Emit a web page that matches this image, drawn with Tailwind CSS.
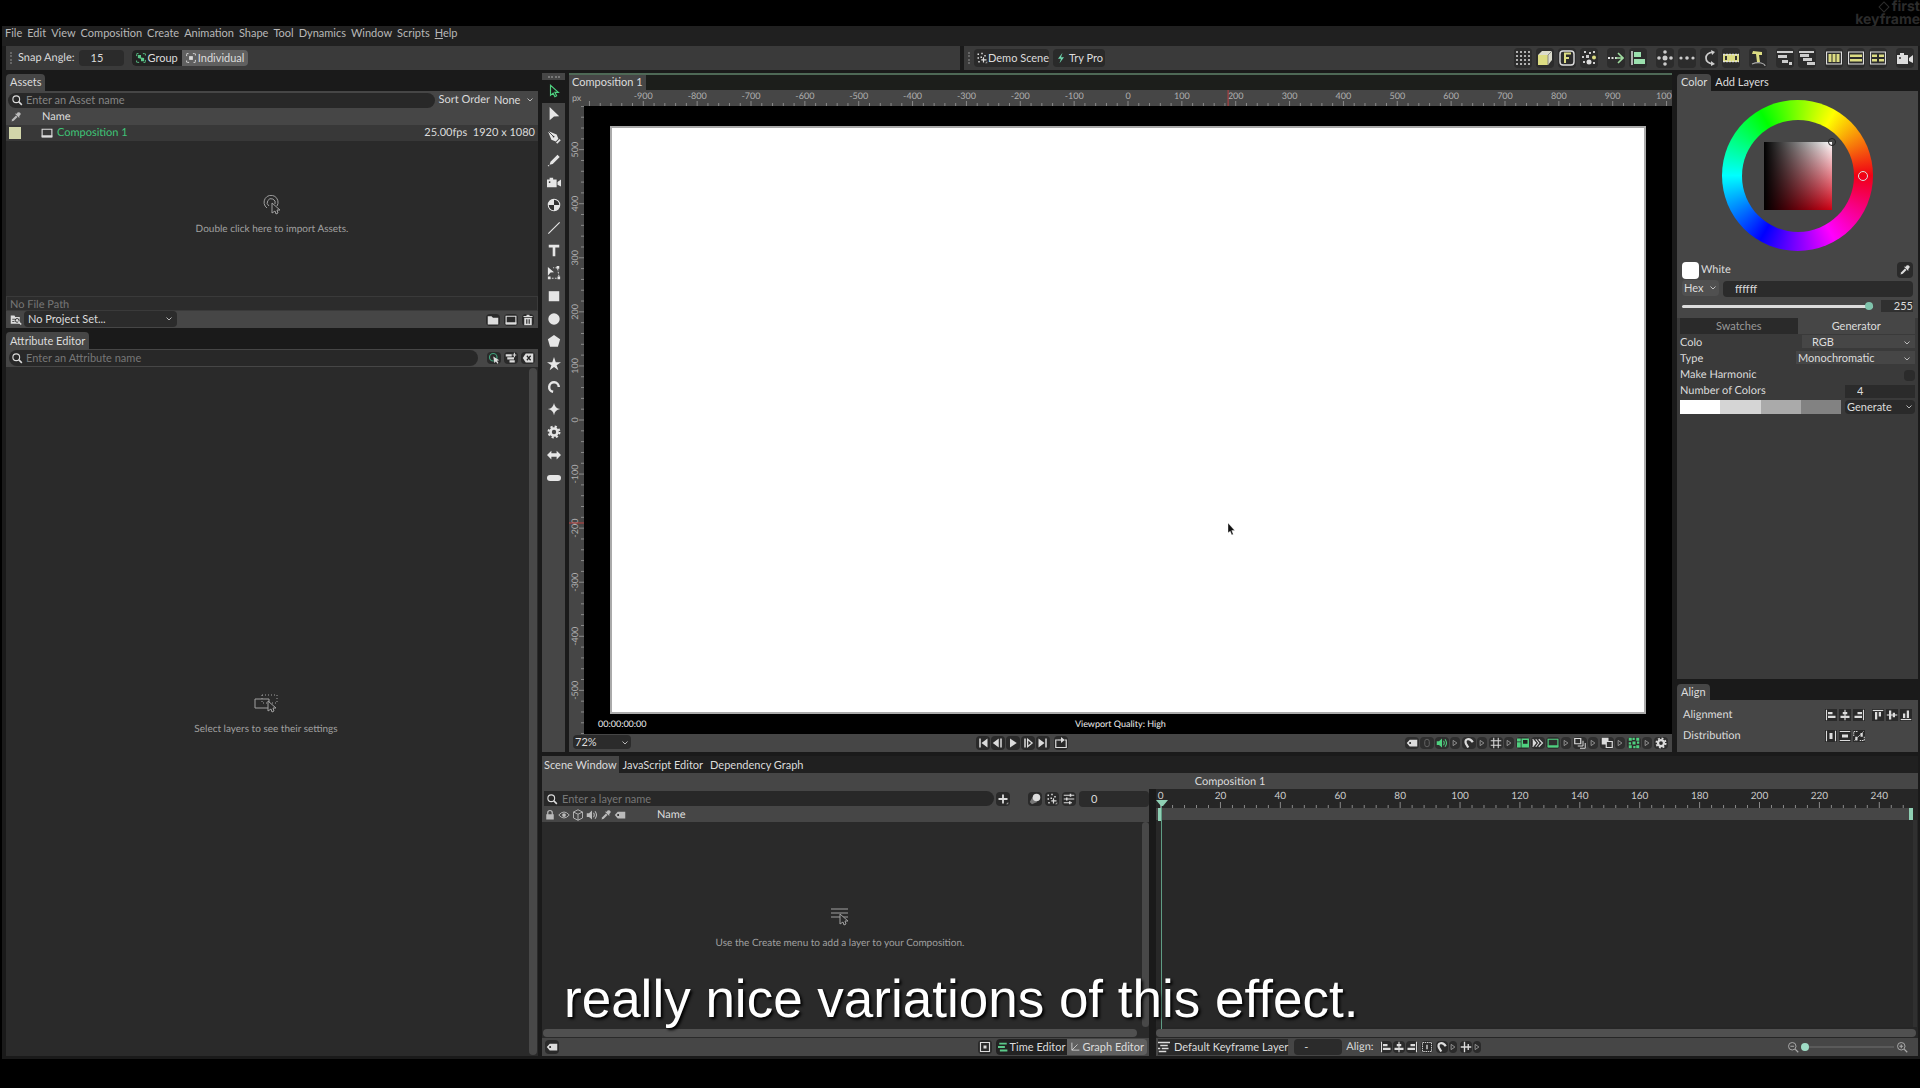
<!DOCTYPE html>
<html lang="en">
<head>
    <title>Composition 1</title>
    <meta charset="UTF-8">
    <meta name="viewport" content="width=device-width, initial-scale=1">
    <script src="https://cdn.jsdelivr.net/npm/@tailwindcss/browser@4"></script>
</head>
<body class="relative flex h-screen flex-col overflow-hidden bg-black font-['Lato',sans-serif] text-[11px] leading-4 text-[#dcdcdc] [text-rendering:geometricPrecision]">

    <!-- icon set, 16x16 -->
    <svg class="hidden">
        <symbol id="search" viewBox="0 0 16 16"><circle cx="7" cy="7" r="4.5" fill="none" stroke="currentColor" stroke-width="1.5"/><path d="M10.5 10.5l4 4" stroke="currentColor" stroke-width="2"/></symbol>
        <symbol id="chevron" viewBox="0 0 16 16"><path d="M3 5l5 5 5-5" fill="none" stroke="currentColor" stroke-width="1.6"/></symbol>
        <symbol id="dropper" viewBox="0 0 16 16"><path d="M2 14l1-3 5-5 2 2-5 5z" fill="currentColor"/><path d="M7 4l5 5 1-1-1-1 2-2q1-2-1-3t-3 0L9 4 8 3z" fill="currentColor"/></symbol>
        <symbol id="monitor" viewBox="0 0 16 16"><path d="M1.5 3h13v10h-13z" fill="none" stroke="currentColor" stroke-width="1.5"/><path d="M1 11h14v3H1z" fill="currentColor"/></symbol>
        <symbol id="folder" viewBox="0 0 16 16"><path d="M1 3h5l2 2h7v9H1z" fill="currentColor"/></symbol>
        <symbol id="folder-search" viewBox="0 0 16 16"><path d="M1 2h5l1 2h6v9H1z" fill="currentColor"/><path d="M3 7h4M3 10h3" stroke="#222" stroke-width="1"/><circle cx="9.500" cy="8.500" r="2.500" fill="currentColor" stroke="#222" stroke-width="1.200"/><path d="M11 10l4 4" stroke="currentColor" stroke-width="2"/></symbol>
        <symbol id="trash" viewBox="0 0 16 16"><path d="M3 5h10v10H3zM2 2.500h4V1h4v1.500h4V4H2z" fill="currentColor"/><path d="M6 7v6M8 7v6M10 7v6" stroke="#222" stroke-width="1"/></symbol>
        <symbol id="tag" viewBox="0 0 16 16"><path d="M1 8l4-4.500h10v9H5z" fill="currentColor"/><circle cx="5.500" cy="8" r="1.300" fill="#222"/></symbol>
        <symbol id="backspace" viewBox="0 0 16 16"><path d="M1 8l4-6h10v12H5z" fill="currentColor"/><path d="M6.500 5l5 6M11.500 5l-5 6" stroke="#222" stroke-width="1.600"/></symbol>
        <symbol id="layers-add" viewBox="0 0 16 16"><path d="M1 3h8v3H1zM3 7h9v3H3zM6 11h7v3H6z" fill="currentColor"/><path d="M12.500 1v6M10 4h5" stroke="currentColor" stroke-width="1.400"/></symbol>
        <symbol id="pick" viewBox="0 0 16 16"><circle cx="7" cy="7" r="5" fill="none" stroke="#3fa07a" stroke-width="1.600"/><path d="M7 6l8 5-3 .5 2 3-1.500 1-2-3-2 2z" fill="#ddd"/></symbol>
        <symbol id="arrow" viewBox="0 0 16 16"><path d="M4 1.500v11.500l3-2.500 2 4 2-1-2-4h4z" fill="none" stroke="currentColor" stroke-width="1.300"/></symbol>
        <symbol id="arrow-fill" viewBox="0 0 16 16"><path d="M3 0l11 10.500-6 .3L3 15z" fill="currentColor"/></symbol>
        <symbol id="pen" viewBox="0 0 16 16"><path d="M1 1l10 4 2 5-3 3-5-2z" fill="currentColor"/><path d="M1 1l6 6" stroke="#333" stroke-width="1"/><circle cx="7.500" cy="7.500" r="1" fill="#333"/><path d="M15 11l-4 4" stroke="currentColor" stroke-width="2"/></symbol>
        <symbol id="pencil" viewBox="0 0 16 16"><path d="M4 10l8-8 2.500 2.500-8 8-3.500 1z" fill="currentColor"/><path d="M1 14.500h1.500" stroke="currentColor" stroke-width="1.200"/></symbol>
        <symbol id="camera" viewBox="0 0 16 16"><path d="M0 5h3V3h4v2h4v9H0zM12 8l4-3v8l-4-2z" fill="currentColor"/><circle cx="3" cy="8" r="1" fill="#333"/></symbol>
        <symbol id="null" viewBox="0 0 16 16"><circle cx="8" cy="8" r="6.500" fill="currentColor" stroke="currentColor" stroke-width="1.300"/><path d="M8 8V2A6 6 0 0 1 14 8zM8 8v6A6 6 0 0 1 2 8z" fill="#333"/></symbol>
        <symbol id="line" viewBox="0 0 16 16"><path d="M1.500 14.500l13-13" stroke="currentColor" stroke-width="1.300"/></symbol>
        <symbol id="type" viewBox="0 0 16 16"><path d="M2 2h12v3H9.500v10h-3V5H2z" fill="currentColor"/></symbol>
        <symbol id="transform" viewBox="0 0 16 16"><path d="M2 14h12L12 2H7" fill="none" stroke="currentColor" stroke-width="1" stroke-dasharray="2 1.500"/><path d="M1 1l7 6-4 .5L1 11z" fill="currentColor"/><path d="M1 12h3v3H1zM12 12h3v3h-3zM11 0h3v3h-3z" fill="currentColor"/></symbol>
        <symbol id="rect" viewBox="0 0 16 16"><path d="M2 2.500h12v11.500H2z" fill="currentColor"/></symbol>
        <symbol id="circle" viewBox="0 0 16 16"><circle cx="8" cy="8" r="6.500" fill="currentColor"/></symbol>
        <symbol id="pentagon" viewBox="0 0 16 16"><path d="M8 1l7 5-2.500 8.500h-9L1 6z" fill="currentColor"/></symbol>
        <symbol id="star" viewBox="0 0 16 16"><path d="M8 0l2 6h6l-5 3.500L13 15l-5-3.500L3 15l2-5.500L0 6h6z" fill="currentColor"/></symbol>
        <symbol id="arc" viewBox="0 0 16 16"><path d="M7 13.500A5.500 5.500 0 1 1 13.500 8" fill="none" stroke="currentColor" stroke-width="2.800"/></symbol>
        <symbol id="sparkle" viewBox="0 0 16 16"><path d="M8 1q1 6 7 7-6 1-7 7-1-6-7-7 6-1 7-7z" fill="currentColor"/></symbol>
        <symbol id="gear" viewBox="0 0 16 16"><circle cx="8" cy="8" r="4" fill="none" stroke="currentColor" stroke-width="3"/><circle cx="8" cy="8" r="6.200" fill="none" stroke="currentColor" stroke-width="2.400" stroke-dasharray="2.500 2.370"/></symbol>
        <symbol id="stretch" viewBox="0 0 16 16"><path d="M0 8l5-5v3h6V3l5 5-5 5v-3H5v3z" fill="currentColor"/></symbol>
        <symbol id="capsule" viewBox="0 0 16 16"><rect x="0" y="4.500" width="16" height="7" rx="3.500" fill="currentColor"/></symbol>
        <symbol id="play" viewBox="0 0 16 16"><path d="M4 2l9 6-9 6z" fill="currentColor"/></symbol>
        <symbol id="start" viewBox="0 0 16 16"><path d="M3 2h2v12H3zM14 2v12L6 8z" fill="currentColor"/></symbol>
        <symbol id="prev" viewBox="0 0 16 16"><path d="M9 2v12L1 8zM11 2h2v12h-2z" fill="currentColor"/></symbol>
        <symbol id="next" viewBox="0 0 16 16"><path d="M3 2h2v12H3z" fill="currentColor"/><path d="M7.500 3l6 5-6 5z" fill="none" stroke="currentColor" stroke-width="1.700"/></symbol>
        <symbol id="end" viewBox="0 0 16 16"><path d="M2 2l8 6-8 6zM11 2h2v12h-2z" fill="currentColor"/></symbol>
        <symbol id="loop" viewBox="0 0 16 16"><path d="M13 4h2v10H1V4h3" fill="none" stroke="currentColor" stroke-width="1.600"/><path d="M4 4h5" stroke="currentColor" stroke-width="1.600"/><path d="M8 0l5 4-5 4z" fill="currentColor"/></symbol>
        <symbol id="tri" viewBox="0 0 8 16"><path d="M1.500 4.500l5 3.500-5 3.500z" fill="none" stroke="#999" stroke-width="1.200"/></symbol>
        <symbol id="pill" viewBox="0 0 16 16"><rect x="5" y="3" width="6" height="10" rx="3" fill="none" stroke="#666" stroke-width="1.200"/></symbol>
        <symbol id="speaker" viewBox="0 0 16 16"><path d="M1 5.500h3L8 2v12l-4-3.500H1z" fill="currentColor"/><path d="M10 5q2 3 0 6M12 3q4 5 0 10" fill="none" stroke="currentColor" stroke-width="1.400"/></symbol>
        <symbol id="magnet" viewBox="0 0 16 16"><path d="M7 14L4 9Q2 4 6 3t7 4" fill="none" stroke="currentColor" stroke-width="3"/></symbol>
        <symbol id="grid" viewBox="0 0 16 16"><path d="M5 1v14M11 1v14M1 5h14M1 11h14" stroke="currentColor" stroke-width="1.400"/></symbol>
        <symbol id="panels" viewBox="0 0 16 16"><path d="M0 2h5v4H0zM0 7h5v7H0zM6 2h10v12H6z" fill="currentColor"/><path d="M8 4h6v5H8z" fill="#222"/></symbol>
        <symbol id="onion" viewBox="0 0 16 16"><path d="M1 3l4 5-4 5M5 3l4 5-4 5M9 3l5 5-5 5" fill="none" stroke="currentColor" stroke-width="1.500"/><path d="M1 3l4 5-4 5z" fill="currentColor"/></symbol>
        <symbol id="copy" viewBox="0 0 16 16"><path d="M1 2h8v7H1z" fill="none" stroke="currentColor" stroke-width="1.600"/><path d="M5 12h7V5M8 15h7V8" fill="none" stroke="currentColor" stroke-width="1.300"/></symbol>
        <symbol id="overlap" viewBox="0 0 16 16"><path d="M1 1h9v9H1z" fill="currentColor"/><path d="M7 6h8v8H7z" fill="#333" stroke="currentColor" stroke-width="1.600"/></symbol>
        <symbol id="checker" viewBox="0 0 16 16"><path d="M1 1h4v4H1zM11 1h4v4h-4zM6 6h4v4H6zM1 11h4v4H1zM11 11h4v4h-4zM6 1h3v3H6zM7 12h3v3H7zM1 7h3v3H1zM12 6h3v3h-3z" fill="currentColor"/></symbol>
        <symbol id="plus" viewBox="0 0 16 16"><path d="M8 2v12M2 8h12" stroke="currentColor" stroke-width="2.400"/><path d="M15 12v3h-3z" fill="#999"/></symbol>
        <symbol id="ball" viewBox="0 0 16 16"><path d="M5 5L1 12l3 3 7-3z" fill="#777"/><circle cx="10" cy="6" r="5" fill="currentColor"/></symbol>
        <symbol id="scatter" viewBox="0 0 16 16"><path d="M2 2h2v2H2zM7 1h2v2H7zM2 7h2v2H2zM11 4h2v2h-2zM6 6h2v2H6zM3 12h2v2H3z" fill="currentColor"/><path d="M10 7v7M7 10.500h7" stroke="currentColor" stroke-width="1.600"/><path d="M15 12v3h-3z" fill="#999"/></symbol>
        <symbol id="sliders" viewBox="0 0 16 16"><path d="M1 3h14M1 8h14M1 13h11" stroke="currentColor" stroke-width="1.500"/><path d="M9 1h2v4H9zM4 6h2v4H4zM8 11h2v4H8z" fill="currentColor"/></symbol>
        <symbol id="lock" viewBox="0 0 16 16"><path d="M3 7h10v7H3z" fill="currentColor"/><path d="M5 8V5q0-3 3-3t3 3v3" fill="none" stroke="currentColor" stroke-width="1.600"/></symbol>
        <symbol id="eye" viewBox="0 0 16 16"><path d="M1 8q7-8 14 0-7 8-14 0z" fill="none" stroke="currentColor" stroke-width="1.200"/><circle cx="8" cy="8" r="2.500" fill="currentColor"/></symbol>
        <symbol id="cube" viewBox="0 0 16 16"><path d="M8 1l6 3v8l-6 3-6-3V4zM2 4l6 3 6-3M8 7v8" fill="none" stroke="currentColor" stroke-width="1.200"/></symbol>
        <symbol id="framebox" viewBox="0 0 16 16"><path d="M2 2h12v12H2z" fill="none" stroke="currentColor" stroke-width="1.500"/><path d="M6 6h4v4H6z" fill="currentColor"/></symbol>
        <symbol id="bars" viewBox="0 0 16 16"><path d="M2 1h12v3H2zM0 6.500h11v3H0zM3 12h12v3H3z" fill="currentColor"/></symbol>
        <symbol id="graph" viewBox="0 0 16 16"><path d="M3 1v12h12M3 13l9-9" fill="none" stroke="currentColor" stroke-width="1.300"/></symbol>
        <symbol id="list" viewBox="0 0 16 16"><path d="M0 2h16M3 6h10M0 10h3M5 10h9M1 14h10" stroke="currentColor" stroke-width="1.800"/></symbol>
        <symbol id="al-left" viewBox="0 0 16 16"><path d="M2 1v14" stroke="currentColor" stroke-width="1.500"/><path d="M4 4h6v3H4zM4 9h10v3H4z" fill="currentColor"/></symbol>
        <symbol id="al-center" viewBox="0 0 16 16"><path d="M8 1v14" stroke="currentColor" stroke-width="1.500"/><path d="M5 4h6v3H5zM2 9h12v3H2z" fill="currentColor"/></symbol>
        <symbol id="al-right" viewBox="0 0 16 16"><path d="M14 1v14" stroke="currentColor" stroke-width="1.500"/><path d="M6 4h6v3H6zM2 9h10v3H2z" fill="currentColor"/></symbol>
        <symbol id="al-top" viewBox="0 0 16 16"><path d="M1 2h14" stroke="currentColor" stroke-width="1.500"/><path d="M4 4h3v10H4zM9 4h3v6H9z" fill="currentColor"/></symbol>
        <symbol id="al-middle" viewBox="0 0 16 16"><path d="M1 8h14" stroke="currentColor" stroke-width="1.500"/><path d="M4 2h3v12H4zM9 5h3v6H9z" fill="currentColor"/></symbol>
        <symbol id="al-bottom" viewBox="0 0 16 16"><path d="M1 14h14" stroke="currentColor" stroke-width="1.500"/><path d="M4 6h3v6H4zM9 2h3v10H9z" fill="currentColor"/></symbol>
        <symbol id="di-h" viewBox="0 0 16 16"><path d="M2 1v14M14 1v14" stroke="currentColor" stroke-width="1.400"/><path d="M6 4h4v8H6z" fill="currentColor"/></symbol>
        <symbol id="di-v" viewBox="0 0 16 16"><path d="M1 2h14M1 14h14" stroke="currentColor" stroke-width="1.400"/><path d="M4 6h8v4H4z" fill="currentColor"/></symbol>
        <symbol id="di-d" viewBox="0 0 16 16"><path d="M2 14L14 2M1 8V2h5M15 9v5H9" fill="none" stroke="currentColor" stroke-width="1.300" stroke-dasharray="2 1"/><path d="M3 9h3v5H3zM10 4h3v5h-3z" fill="currentColor"/></symbol>
        <symbol id="keybox" viewBox="0 0 16 16"><path d="M2 2h12v12H2z" fill="none" stroke="currentColor" stroke-width="1.200" stroke-dasharray="2 1"/><path d="M8 5v6" stroke="currentColor" stroke-width="1.800"/></symbol>
        <symbol id="snapkey" viewBox="0 0 16 16"><path d="M6 1v14M11 4v8M1 8h14" stroke="currentColor" stroke-width="1.800"/></symbol>
        <symbol id="zoom-out" viewBox="0 0 16 16"><circle cx="7" cy="7" r="5" fill="none" stroke="currentColor" stroke-width="1.300"/><path d="M4.500 7h5M11 11l4 4" stroke="currentColor" stroke-width="1.500"/></symbol>
        <symbol id="zoom-in" viewBox="0 0 16 16"><circle cx="7" cy="7" r="5" fill="none" stroke="currentColor" stroke-width="1.300"/><path d="M4.500 7h5M7 4.500v5M11 11l4 4" stroke="currentColor" stroke-width="1.500"/></symbol>
        <symbol id="corners" viewBox="0 0 16 16"><path d="M1 5V1h4M11 1h4v4M15 11v4h-4M5 15H1v-4" fill="none" stroke="currentColor" stroke-width="1.500" stroke-dasharray="3 1"/><path d="M5 5h6v6H5z" fill="currentColor"/></symbol>
        <symbol id="group" viewBox="0 0 16 16"><path d="M1 5V1h4M11 1h4v4M15 11v4h-4M5 15H1v-4" fill="none" stroke="currentColor" stroke-width="1.500" stroke-dasharray="3 1"/><path d="M3 3h5v4l5 1v5H8V9L3 8z" fill="currentColor"/></symbol>
        <symbol id="bolt" viewBox="0 0 16 16"><path d="M10 1L4 9h4l-2 6 6-8H8z" fill="currentColor"/></symbol>
        <symbol id="dots9" viewBox="0 0 16 16"><path d="M1 2h14M1 6h14M1 10h14M1 14h14" stroke="currentColor" stroke-width="1.700" stroke-dasharray="2 2"/></symbol>
        <symbol id="cube3d" viewBox="0 0 16 16"><path d="M1 5l4-4h10v9l-4 5H1z" fill="#dcdccc"/><path d="M1 5h10v10H1z" fill="#dcdc82"/><path d="M11 5l4-4M11 5v10" stroke="#777" stroke-width=".8"/></symbol>
        <symbol id="falloff" viewBox="0 0 16 16"><rect x="1" y="1" width="14" height="14" rx="3" fill="none" stroke="#ddd" stroke-width="1.400"/><path d="M6 13V3.500h6M6 8h4" fill="none" stroke="#dcdc82" stroke-width="2"/></symbol>
        <symbol id="particles" viewBox="0 0 16 16"><path d="M3 1h2v2H3zM8 2h2v2H8zM1 6h2v2H1zM12 1h2v2h-2zM5 5h3v3H5zM2 11h2v2H2zM12 12h2v2h-2z" fill="#ccc"/><circle cx="8" cy="12" r="2.500" fill="#ddd"/><circle cx="13" cy="7.500" r="2" fill="#dcdc82"/></symbol>
        <symbol id="dash-arrow" viewBox="0 0 16 16"><path d="M0 8h9" stroke="#ddd" stroke-width="2" stroke-dasharray="2 1.500"/><path d="M8 8h6M10 3l5 5-5 5" fill="none" stroke="#a0dca0" stroke-width="1.600"/></symbol>
        <symbol id="align-c" viewBox="0 0 16 16"><path d="M2 1v14" stroke="#ddd" stroke-width="1.500"/><path d="M4 2h7v5H4zM4 9h11v5H4z" fill="#9be0ae"/></symbol>
        <symbol id="cross-dots" viewBox="0 0 16 16"><g fill="#ccc"><circle cx="8" cy="2" r="1.800"/><circle cx="8" cy="14" r="1.800"/><circle cx="2" cy="8" r="1.800"/><circle cx="14" cy="8" r="1.800"/><circle cx="8" cy="8" r="2.500"/></g></symbol>
        <symbol id="dots3" viewBox="0 0 16 16"><g fill="#ccc"><circle cx="2" cy="8" r="1.600"/><circle cx="8" cy="8" r="1.800"/><circle cx="14" cy="8" r="1.600"/></g></symbol>
        <symbol id="bend" viewBox="0 0 16 16"><path d="M12 2Q5 3 5 8t7 6" fill="none" stroke="#ccc" stroke-width="1.700"/><path d="M10 0l4 2-3 3zM10 11l4 3-4 2z" fill="#ccc"/></symbol>
        <symbol id="film" viewBox="0 0 16 16"><path d="M0 4h16v8H0z" fill="#dcdc82"/><path d="M0 4.500h16M0 11.500h16" stroke="#ddd" stroke-width="1.400" stroke-dasharray="2 1"/><path d="M3 6v4M13 6v4" stroke="#333" stroke-width="2"/></symbol>
        <symbol id="text-path" viewBox="0 0 16 16"><path d="M3 1l9 1v3H9l1 7H7L6 4H2z" fill="#dcdc82"/><path d="M2 14q5-2 9-1t4 3" fill="none" stroke="#aaa" stroke-width="1.200"/></symbol>
        <symbol id="stagger" viewBox="0 0 16 16"><path d="M0 1h16v2H0zM1 5h9v3H1zM5 10h6v3H5zM12 12h3v3h-3z" fill="#ccc"/></symbol>
        <symbol id="stagger2" viewBox="0 0 16 16"><path d="M0 1h15v2H0zM1 4h9v3H1zM4 8h9v3H4zM8 12h8v3H8z" fill="#ccc"/></symbol>
        <symbol id="cols" viewBox="0 0 16 16"><path d="M.5 2h15v12H.5z" fill="none" stroke="#ddd" stroke-width="1.200"/><path d="M2.500 4h3v8h-3zM6.500 4h3v8h-3zM10.500 4h3v8h-3z" fill="#dcdc82"/></symbol>
        <symbol id="rows" viewBox="0 0 16 16"><path d="M.5 2h15v12H.5z" fill="none" stroke="#ddd" stroke-width="1.200"/><path d="M2 4.500h12v2.500H2zM2 9h12v2.500H2z" fill="#dcdc82"/></symbol>
        <symbol id="cells" viewBox="0 0 16 16"><path d="M.5 2h15v12H.5z" fill="none" stroke="#ddd" stroke-width="1.200"/><path d="M2 4.500h5v2.500H2zM9 4.500h5v2.500H9zM2 9h5v2.500H2zM9 9h5v2.500H9z" fill="#dcdc82"/></symbol>
    </svg>

    <header class="flex h-[26px] shrink-0 flex-col items-end justify-center font-['Inter',sans-serif] text-[14px] leading-[13px] font-bold text-[#2c2c2c]">
        <div class="flex items-center gap-1"><span class="size-2 rotate-45 border border-[#2c2c2c]"></span>first</div>
        <div>keyframe</div>
    </header>

    <main class="ml-[2px] flex min-h-0 flex-1 flex-col bg-[#1a1a1a] pb-[3px]">
        <nav class="flex h-5 shrink-0 items-center gap-[5px] bg-[#202020] pb-[6px] pl-[3px] text-[#b8b8b8]">
            <button>File</button><button>Edit</button><button>View</button><button>Composition</button><button>Create</button><button>Animation</button><button>Shape</button><button>Tool</button><button>Dynamics</button><button>Window</button><button>Scripts</button><button><u>H</u>elp</button>
        </nav>

        <div class="flex h-6 shrink-0 gap-1 pr-[2px] pl-1">
            <div class="flex w-[954px] items-center bg-[#3a3a3a]">
                <span class="ml-1 h-3 border-l-2 border-dotted border-[#666]"></span>
                <label for="snap" class="ml-[6px]">Snap Angle:</label>
                <input id="snap" value="15" class="ml-1 h-4 w-[45px] rounded-sm bg-[#2b2b2b] pl-3">
                <div class="ml-2 flex h-4 rounded-sm bg-[#606060]">
                    <button class="flex items-center gap-[2px] rounded-l-sm bg-[#222] px-1"><svg class="size-[10px] text-[#5bc98a]"><use href="#group"/></svg>Group</button>
                    <button class="flex items-center gap-[2px] px-1"><svg class="size-[10px]"><use href="#corners"/></svg>Individual</button>
                </div>
            </div>
            <div class="flex flex-1 items-center bg-[#3a3a3a] pr-1">
                <span class="ml-1 h-3 border-l-2 border-dotted border-[#666]"></span>
                <button class="ml-1 flex h-[18px] items-center rounded-sm bg-[#2a2a2a] pl-[2px]"><svg class="size-3"><use href="#scatter"/></svg>Demo Scene</button>
                <button class="ml-1 flex h-[18px] items-center gap-[2px] rounded-sm bg-[#2a2a2a] px-[2px]"><svg class="size-3 text-[#6fd6ae]"><use href="#bolt"/></svg>Try Pro</button>
                <div id="modeTools" class="ml-auto flex gap-1"></div>
            </div>
        </div>

        <div class="flex min-h-0 flex-1 gap-1 pt-[3px] pr-[2px] pl-1">
            <!-- left column -->
            <div class="flex w-[532px] shrink-0 flex-col">
                <div class="flex h-[18px] pt-px"><button class="rounded-t-sm bg-[#464646] px-1 pb-[2px]">Assets</button></div>
                <div class="flex h-[18px] items-center bg-[#464646]">
                    <label class="ml-[2px] flex h-[15px] flex-1 items-center gap-[3px] rounded-full bg-[#282828] pl-[3px]"><svg class="size-3"><use href="#search"/></svg><input aria-label="Asset name" placeholder="Enter an Asset name" class="flex-1 placeholder:text-[#858585]"></label>
                    <label for="sort" class="ml-1">Sort Order</label>
                    <span class="relative ml-1"><select id="sort" class="w-[44px] appearance-none"><option>None</option></select><svg class="pointer-events-none absolute top-1 right-1 size-2"><use href="#chevron"/></svg></span>
                </div>
                <div class="flex h-4 items-center bg-[#464646] pl-1"><svg class="mr-5 size-3 text-[#bbb]"><use href="#dropper"/></svg>Name</div>
                <div class="flex h-4 items-center bg-[#383838] px-[3px]"><span class="size-3 bg-[#d2d6aa]"></span><svg class="ml-5 size-3"><use href="#monitor"/></svg><span class="ml-1 text-[#3fc477]">Composition 1</span><span class="ml-auto">25.00fps&nbsp; 1920 x 1080</span></div>
                <div class="flex h-[155px] shrink-0 flex-col items-center justify-center gap-[6px] bg-[#2a2a2a] pb-[5px] text-[10px] text-[#a0a0a0]">
                    <svg class="size-5" viewBox="0 0 20 20" fill="none" stroke="currentColor"><path d="M5 13a7 7 0 1 1 10-2M7 11a4 4 0 1 1 6-2"/><path d="M10 8v10l3-2 1 3 2-1-1-3h3z" fill="#2a2a2a"/></svg>
                    Double click here to import Assets.
                </div>
                <div class="h-[15px] border border-[#3a3a3a] bg-[#2c2c2c] pl-[3px] leading-[15px] text-[#777]">No File Path</div>
                <div class="flex h-[17px] items-center gap-[2px] bg-[#464646] px-1">
                    <svg class="size-3"><use href="#folder-search"/></svg>
                    <span class="relative"><select aria-label="Project" class="h-4 w-[153px] appearance-none rounded-sm bg-[#2b2b2b] pl-1"><option>No Project Set...</option></select><svg class="pointer-events-none absolute top-1 right-1 size-2"><use href="#chevron"/></svg></span>
                    <button class="mr-[2px] ml-auto rounded-sm bg-[#2a2a2a] px-px" aria-label="New folder"><svg class="size-3"><use href="#folder"/></svg></button>
                    <button class="mr-[2px] rounded-sm bg-[#2a2a2a] px-px" aria-label="New composition"><svg class="size-3"><use href="#monitor"/></svg></button>
                    <button class="rounded-sm bg-[#2a2a2a]" aria-label="Delete"><svg class="size-3"><use href="#trash"/></svg></button>
                </div>
                <div class="mt-1 flex h-[17px]"><button class="rounded-t-sm bg-[#464646] px-1">Attribute Editor</button></div>
                <div class="flex h-[18px] items-center gap-[3px] bg-[#464646] px-[3px]">
                    <label class="flex h-4 flex-1 items-center gap-[3px] rounded-full bg-[#282828] pl-[2px]"><svg class="size-3"><use href="#search"/></svg><input aria-label="Attribute name" placeholder="Enter an Attribute name" class="flex-1 placeholder:text-[#777]"></label>
                    <button class="ml-[6px] rounded-sm bg-[#2a2a2a] px-px" aria-label="Pick"><svg class="size-3"><use href="#pick"/></svg></button>
                    <button class="rounded-sm bg-[#2a2a2a] px-px" aria-label="Add layers"><svg class="size-3"><use href="#layers-add"/></svg></button>
                    <button class="rounded-sm bg-[#2a2a2a] px-px" aria-label="Clear"><svg class="size-3"><use href="#backspace"/></svg></button>
                </div>
                <div class="flex min-h-0 flex-1 bg-[#2a2a2a] p-px">
                    <div class="flex flex-1 flex-col items-center justify-center gap-2 pt-[6px] pr-1 text-[10px] text-[#a0a0a0]">
                        <svg class="h-5 w-6" viewBox="0 0 24 20" fill="none" stroke="currentColor"><path d="M1 6h14v9H1z"/><path d="M8 2h15v8H8z" stroke-dasharray="1 2"/><path d="M14 8v10l3-2 1 3 2-1-1-3h3z" fill="#2a2a2a"/></svg>
                        Select layers to see their settings
                    </div>
                    <div class="w-2 rounded-sm bg-[#484848]"></div>
                </div>
            </div>

            <div class="flex min-w-0 flex-1 flex-col gap-1">
                <div class="flex min-h-0 flex-1 gap-1">
                    <!-- tool strip -->
                    <div class="flex w-[23px] shrink-0 flex-col items-center bg-[#464646] text-[#e6e6e6]">
                        <span class="mt-[3px] mb-[2px] w-3 border-t-2 border-dotted border-[#777]"></span>
                        <div id="toolStrip" class="flex h-[409px] w-full flex-col"></div>
                    </div>

                    <!-- viewport -->
                    <section class="mr-px flex min-w-0 flex-1 flex-col border-t-2 border-[#4e6956]">
                        <div class="flex h-[15px] shrink-0 bg-[#1c1e1b] leading-[13px]"><button class="bg-[#464646] px-[3px] pb-[2px]">Composition 1</button></div>
                        <div class="flex h-4 shrink-0 bg-[#464646] text-[9px] text-[#b0b0b0]"><span class="w-[15px] shrink-0 pl-[3px]">px</span><svg id="rulerX" class="h-4 w-full min-w-0 flex-1"></svg></div>
                        <div class="flex min-h-0 flex-1 bg-[#464646] text-[9px] text-[#b0b0b0]">
                            <svg id="rulerY" class="h-full w-[15px] shrink-0"></svg>
                            <div class="relative flex flex-1 items-center justify-center bg-black text-[9px] leading-3 text-[#eee]">
                                <div class="aspect-[1037/588] w-[95.3%] border-2 border-[#aaa] bg-white"></div>
                                <svg class="absolute top-[66.4%] left-[59.1%] h-3 w-2" viewBox="0 0 10 16"><path d="M1 0v13l3-2 2 5 2-1-2-5h4z" fill="#111" stroke="#fff" stroke-width=".5"/></svg>
                                <span class="absolute bottom-1 left-[14px]">00:00:00:00</span>
                                <span class="absolute bottom-1 left-[49.300%] -translate-x-1/2">Viewport Quality: High</span>
                            </div>
                        </div>
                        <div class="flex h-[18px] shrink-0 items-center bg-[#464646] px-1">
                            <span class="relative"><select aria-label="Zoom" class="h-[14px] w-[58px] appearance-none rounded-sm bg-[#2b2b2b] pl-[2px] leading-[14px]"><option>72%</option></select><svg class="pointer-events-none absolute top-1 right-[2px] size-2"><use href="#chevron"/></svg></span>
                            <div id="transport" class="ml-[345px] flex gap-px"></div>
                            <div id="viewOptions" class="ml-auto flex gap-px"></div>
                        </div>
                    </section>

                    <!-- right column -->
                    <aside class="flex w-[241px] shrink-0 flex-col">
                        <div class="flex h-[18px] shrink-0 pt-px"><button class="rounded-t-sm bg-[#464646] px-1 pb-[2px]">Color</button><button class="px-1 pb-[2px]">Add Layers</button></div>
                        <div class="flex flex-1 flex-col bg-[#3a3a3a]">
                            <div class="bg-[#464646] px-[5px] pt-[9px] pb-1">
                                <div class="relative mx-auto flex size-[151px] items-center justify-center rounded-full bg-[conic-gradient(from_90deg,#f00014,#f0f,#00f,#0ff,#0f0,#ff0,#f00014)]">
                                    <div class="flex size-[112px] items-center justify-center rounded-full bg-[#464646]">
                                        <div class="relative size-[68px] bg-[linear-gradient(to_right,#000,transparent),linear-gradient(to_bottom,#fff,#d00014)]"><span class="absolute -top-1 -right-1 size-2 rounded-full border border-[#222]"></span></div>
                                    </div>
                                    <span class="absolute right-[5px] size-[10px] rounded-full border border-[#ddd]"></span>
                                </div>
                                <div class="mt-[9px] flex h-5 items-center gap-[2px]"><span class="size-[17px] rounded-sm bg-white"></span>White<button class="ml-auto rounded-sm bg-[#2a2a2a] p-[2px]" aria-label="Pick color"><svg class="size-3"><use href="#dropper"/></svg></button></div>
                                <div class="flex h-[17px] items-center gap-1">
                                    <span class="relative"><select aria-label="Color format" class="w-[37px] appearance-none rounded-sm bg-[#505050] pl-[2px]"><option>Hex</option></select><svg class="pointer-events-none absolute top-1 right-[2px] size-2"><use href="#chevron"/></svg></span>
                                    <input aria-label="Hex value" value="ffffff" class="h-4 min-w-0 flex-1 rounded-sm bg-[#2b2b2b] pl-3">
                                </div>
                                <div class="mt-px flex h-4 items-center gap-2">
                                    <input type="range" aria-label="Alpha" max="255" value="255" class="h-[3px] min-w-0 flex-1 appearance-none rounded-full bg-[#ddd] [&::-webkit-slider-thumb]:size-2 [&::-webkit-slider-thumb]:appearance-none [&::-webkit-slider-thumb]:rounded-full [&::-webkit-slider-thumb]:bg-[#7fc4ac]">
                                    <input aria-label="Alpha value" value="255" class="h-3 w-8 bg-[#303030] text-right">
                                </div>
                            </div>
                            <div class="mx-[3px] flex h-4 bg-[#2a2a2a]"><button class="flex-1 text-[#999]">Swatches</button><button class="flex-1 bg-[#464646]">Generator</button></div>
                            <div class="flex flex-col px-[3px] pt-px">
                                <div class="flex h-4 items-center justify-between"><label for="space">Colo</label><span class="relative"><select id="space" class="h-[13px] w-[113px] appearance-none bg-[#464646] pl-[10px] leading-[13px]"><option>RGB</option></select><svg class="pointer-events-none absolute top-1 right-1 size-2"><use href="#chevron"/></svg></span></div>
                                <div class="flex h-4 items-center justify-between"><label for="type">Type</label><span class="relative"><select id="type" class="h-[13px] w-[119px] appearance-none bg-[#464646] pl-[2px] leading-[13px]"><option>Monochromatic</option></select><svg class="pointer-events-none absolute top-1 right-1 size-2"><use href="#chevron"/></svg></span></div>
                                <div class="flex h-4 items-center justify-between"><label for="harm">Make Harmonic</label><input id="harm" type="checkbox" class="size-[11px] appearance-none rounded-sm bg-[#2b2b2b]"></div>
                                <div class="flex h-4 items-center justify-between"><label for="num">Number of Colors</label><input id="num" value="4" class="h-[13px] w-[70px] bg-[#2b2b2b] pl-3"></div>
                                <div class="mt-px flex h-[14px] gap-1"><div class="flex flex-1"><span class="flex-1 bg-white"></span><span class="flex-1 bg-[#d5d5d5]"></span><span class="flex-1 bg-[#aaa]"></span><span class="flex-1 bg-[#828282]"></span></div><button class="flex w-[70px] items-center justify-between rounded-sm bg-[#2a2a2a] px-[2px]">Generate<svg class="size-2"><use href="#chevron"/></svg></button></div>
                            </div>
                        </div>
                        <div class="mt-[5px] flex h-4 shrink-0"><button class="rounded-t-sm bg-[#464646] px-1">Align</button></div>
                        <div class="h-[52px] shrink-0 bg-[#464646] px-[6px] pt-[6px]">
                            <div class="flex h-[18px] items-center justify-between">Alignment<div id="alignIcons" class="flex gap-[2px]"></div></div>
                            <div class="mt-[3px] flex h-[18px] items-center justify-between">Distribution<div id="distIcons" class="mr-[47px] flex gap-[2px]"></div></div>
                        </div>
                    </aside>
                </div>

                <!-- scene window -->
                <section class="flex h-[300px] shrink-0 flex-col">
                    <div class="flex h-[17px] shrink-0 bg-[#202020]"><button class="bg-[#464646] px-[2px]">Scene Window</button><button class="px-1">JavaScript Editor</button><button class="px-[3px]">Dependency Graph</button></div>
                    <div class="flex h-4 shrink-0 justify-center bg-[#464646] leading-[18px]">Composition 1</div>
                    <div class="flex min-h-0 flex-1 gap-[7px]">
                        <div class="flex w-[607px] shrink-0 flex-col bg-[#464646]">
                            <div class="flex h-[19px] items-center">
                                <label class="ml-[2px] flex h-[15px] w-[450px] items-center gap-1 rounded-r-full bg-[#282828] pl-[2px]"><svg class="size-3"><use href="#search"/></svg><input aria-label="Layer name" placeholder="Enter a layer name" class="flex-1 placeholder:text-[#777]"></label>
                                <button class="ml-[2px] rounded-sm bg-[#2a2a2a] p-px" aria-label="Add"><svg class="size-3"><use href="#plus"/></svg></button>
                                <div id="sceneTools" class="ml-auto flex gap-[3px]"></div>
                                <input aria-label="Frame offset" value="0" class="ml-[3px] h-4 w-[70px] rounded-sm bg-[#2b2b2b] pl-3">
                            </div>
                            <div class="flex h-[14px] items-center gap-[3px] pb-px pl-[2px] leading-[14px]"><div id="columnIcons" class="flex gap-[2px]"></div><span class="ml-7">Name</span></div>
                            <div class="flex min-h-0 flex-1 bg-[#2a2a2a]">
                                <div class="flex flex-1 flex-col items-center justify-center gap-2 pt-2 pr-1 text-[10px] text-[#a0a0a0]">
                                    <svg class="h-5 w-5" viewBox="0 0 20 20" fill="none" stroke="currentColor"><path d="M1 2h17M1 6h17M1 10h17"/><path d="M10 7v10l3-2 1 3 2-1-1-3h3z" fill="#2a2a2a"/></svg>
                                    Use the Create menu to add a layer to your Composition.
                                </div>
                                <div class="w-[7px] rounded-sm bg-[#484848]"></div>
                            </div>
                            <div class="bg-[#2a2a2a] pt-[2px] pr-3 pb-px pl-px"><div class="h-2 rounded-sm bg-[#505050]"></div></div>
                            <div class="flex h-[18px] items-center pl-[3px]">
                                <button class="rounded-sm bg-[#2a2a2a] p-px" aria-label="Tags"><svg class="size-3"><use href="#tag"/></svg></button>
                                <button class="ml-auto rounded-sm bg-[#2a2a2a] p-px" aria-label="Frame selection"><svg class="size-3"><use href="#framebox"/></svg></button>
                                <div class="mr-[2px] ml-1 flex h-4 rounded-sm bg-[#606060]">
                                    <button class="flex items-center gap-[2px] rounded-l-sm bg-[#222] px-[2px]"><svg class="size-[10px] text-[#5bc98a]"><use href="#bars"/></svg>Time Editor</button>
                                    <button class="flex items-center gap-[2px] px-[3px]"><svg class="size-[10px]"><use href="#graph"/></svg>Graph Editor</button>
                                </div>
                            </div>
                        </div>
                        <div class="relative flex min-w-0 flex-1 flex-col bg-[#262626]">
                            <svg id="timeRuler" class="h-[19px] w-full shrink-0 text-[#ccc]"></svg>
                            <div class="mr-[5px] h-3 shrink-0 border-r-4 border-[#8fd0b4] bg-[#464646]"></div>
                            <div class="mr-px flex-1 border-r-4 border-[#303030] bg-[#282828]"></div>
                            <!-- playhead -->
                            <div class="absolute top-[11px] bottom-[27px] left-0 w-3"><svg class="h-full w-3 text-[#8fd0b4]"><path d="M0 0h12L7 6H5zM2 8h4v13H2z" fill="currentColor"/><path d="M5 6h1v600H5z" fill="#5f9c84"/></svg></div>
                            <div class="pt-[2px] pr-[2px] pb-px"><div class="h-2 rounded-sm bg-[#505050]"></div></div>
                            <div class="flex h-[18px] items-center bg-[#464646] px-[2px]">
                                <button class="flex items-center gap-1 bg-[#2a2a2a]"><svg class="size-3"><use href="#list"/></svg>Default Keyframe Layer</button>
                                <input aria-label="Keyframe value" value="-" class="ml-[6px] h-4 w-[48px] rounded-sm bg-[#2b2b2b] pl-[10px]">
                                <span class="ml-1">Align:</span>
                                <div id="keyTools" class="ml-[6px] flex gap-px"></div>
                                <div class="mr-2 ml-auto flex items-center gap-[2px]"><svg class="size-3 text-[#aaa]"><use href="#zoom-out"/></svg><input type="range" aria-label="Timeline zoom" value="0" class="h-[2px] w-[93px] appearance-none bg-[#5a5a5a] [&::-webkit-slider-thumb]:size-2 [&::-webkit-slider-thumb]:appearance-none [&::-webkit-slider-thumb]:rounded-full [&::-webkit-slider-thumb]:bg-[#9fdcc6]"><svg class="size-3 text-[#aaa]"><use href="#zoom-in"/></svg></div>
                            </div>
                        </div>
                    </div>
                </section>
            </div>
        </div>
    </main>
    <footer class="h-[29px] shrink-0"></footer>

    <!-- caption -->
    <p class="absolute bottom-14 left-[564px] font-['Liberation_Sans',sans-serif] text-[53px] leading-[64px] text-white [text-shadow:2px_2px_3px_#000]">really nice variations of this effect.</p>

    <script>
        // fills a container with icon buttons; names are symbol ids, "|" adds a gap
        function addIcons(id, names, btn, icon, gap) {
            document.getElementById(id).innerHTML = names.split(' ').map(name => {
                if (name === '|') return `<span class="${gap}"></span>`;
                const [symbol, tone] = name.split(':');
                const wide = symbol === 'tri' ? 'w-2 h-3' : icon;
                const color = tone ? 'text-[#4fd07f]' : '';
                return `<button class="${btn} ${color}" aria-label="${symbol}"><svg class="${wide}"><use href="#${symbol}"/></svg></button>`;
            }).join('');
        }

        addIcons('modeTools', 'dots9 cube3d falloff particles | dash-arrow align-c | cross-dots dots3 bend film | text-path | stagger stagger2 | cols rows cells | camera', 'rounded-sm bg-[#2c2c2c] px-px py-[2px]', 'size-4', 'w-px');
        addIcons('toolStrip', 'arrow:g arrow-fill pen pencil camera null line type transform rect circle pentagon star arc sparkle gear stretch capsule', 'flex flex-1 items-center justify-center first:bg-[#1a1a1a]', 'size-[14px]', '');
        addIcons('transport', 'start prev play next end | loop', 'rounded-sm bg-[#2a2a2a] p-px', 'size-3', 'w-[2px]');
        addIcons('viewOptions', 'tag pill speaker:g tri | magnet tri | grid tri | panels:g onion monitor:g tri | copy tri | overlap tri | checker:g tri | gear', 'rounded-sm bg-[#2e2e2e] px-px', 'size-3', '');
        addIcons('alignIcons', 'al-left al-center al-right | al-top al-middle al-bottom', 'bg-[#2a2a2a]', 'size-3', 'w-[3px]');
        addIcons('distIcons', 'di-h di-v di-d', 'bg-[#2a2a2a]', 'size-3', '');
        addIcons('sceneTools', 'ball scatter sliders', 'rounded-sm bg-[#2a2a2a] p-px', 'size-3', '');
        addIcons('columnIcons', 'lock eye cube speaker dropper tag', 'text-[#bbb]', 'size-3', '');
        addIcons('keyTools', 'al-left al-center al-right | keybox | magnet tri | snapkey tri', 'rounded-sm bg-[#2a2a2a]', 'size-3', 'w-px');

        // viewport rulers: comp units, origin in the middle
        function tick(x1, y1, x2, y2, color) {
            return `<line x1="${x1}" y1="${y1}" x2="${x2}" y2="${y2}" stroke="${color}"/>`;
        }
        let out = '';
        for (let u = -1000; u <= 1000; u += 20) {
            const x = 50 + u * 0.0495 + '%';
            const major = u % 100 === 0;
            out += tick(x, major ? 11 : 13, x, 16, '#8a8a8a');
            if (major && u > -1000) out += `<text x="${x}" y="9" text-anchor="middle" fill="currentColor">${u}</text>`;
        }
        out += tick('59.2%', 0, '59.2%', 16, '#c04040');
        document.getElementById('rulerX').innerHTML = out;

        out = '';
        for (let u = -580; u <= 580; u += 20) {
            const y = 50 - u * 0.0861 + '%';
            const major = u % 100 === 0;
            out += tick(major ? 10 : 12, y, 15, y, '#8a8a8a');
            if (major) out += `<svg y="${y}" class="overflow-visible"><text transform="translate(9 0) rotate(-90)" text-anchor="middle" fill="currentColor">${u}</text></svg>`;
        }
        out += tick(0, '66.4%', 15, '66.4%', '#c04040');
        document.getElementById('rulerY').innerHTML = out;

        // timeline ruler in frames
        out = '';
        for (let f = 0; f <= 248; f += 4) {
            const x = 0.6 + f * 0.393 + '%';
            out += tick(x, f % 20 ? 16 : 13, x, 19, '#8a8a8a');
            if (f % 20 === 0) out += `<text x="${x}" y="10" text-anchor="middle" font-size="10" fill="currentColor">${f}</text>`;
        }
        document.getElementById('timeRuler').innerHTML = out;
    </script>
</body>
</html>
